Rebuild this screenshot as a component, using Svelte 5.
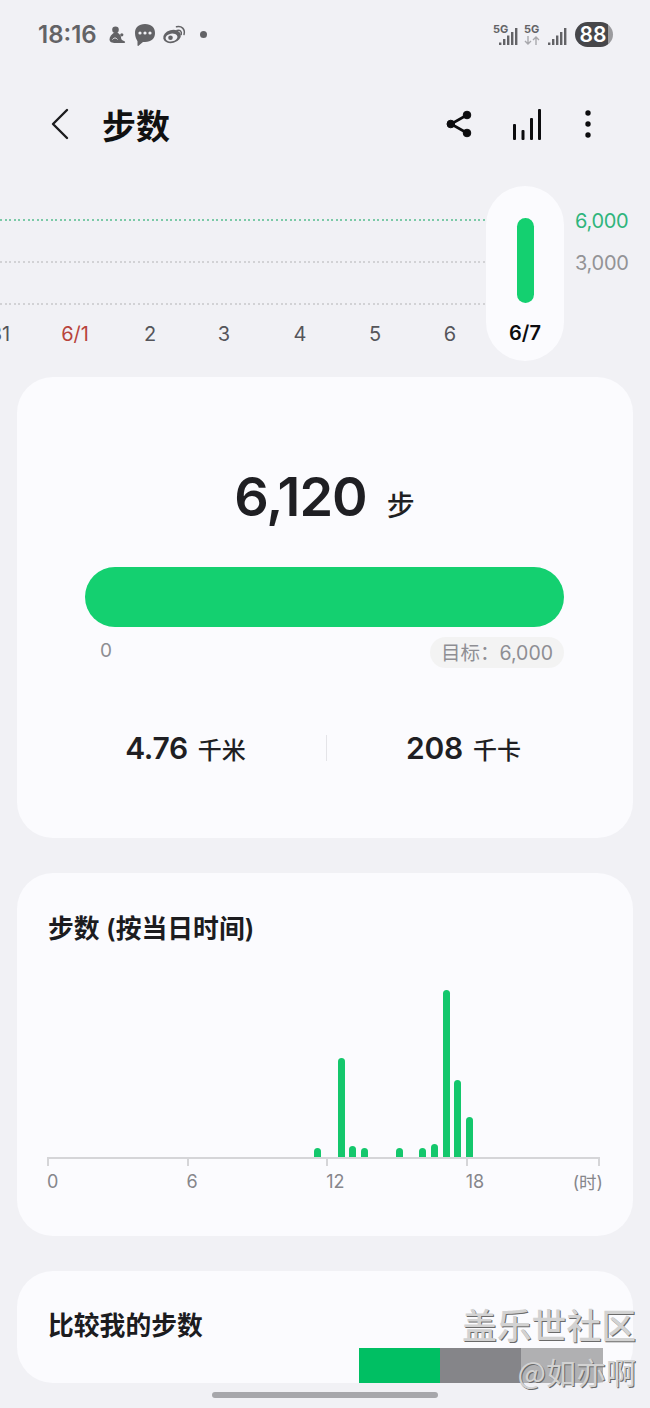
<script>
  const days = [
    { label: '31', x: 0 },
    { label: '6/1', x: 75, red: true },
    { label: '2', x: 150 },
    { label: '3', x: 224 },
    { label: '4', x: 300 },
    { label: '5', x: 375 },
    { label: '6', x: 450 }
  ];
  // half-hour slot -> bar height
  const steps = { 23: 9, 25: 99, 26: 11, 27: 9, 30: 9, 32: 9, 33: 13, 34: 167, 35: 77, 36: 40 };
  const slots = Array.from({ length: 47 }, (_, i) => steps[i] || 0);
  const hours = ['0', '6', '12', '18'];
</script>

<div class="page">
  <div class="status">
    <span class="time">18:16</span>
    <svg class="notif" width="90" height="26" viewBox="0 0 90 26" fill="#636366">
      <!-- qq -->
      <circle cx="8.500" cy="8.800" r="3.300"/>
      <path d="M8 11C4.500 13 2.500 16 2.500 18.500 2.500 21 5 22 8.500 22H17c1.500 0 1.500-1.500 0-2-2.500-1-3-2-3-4 0-2-3-4-4-5z"/>
      <circle cx="14.800" cy="13.800" r="1.600"/>
      <path d="M5.500 18.500c1.500-2 3.500-2 5 0" fill="none" stroke="#f1f1f5" stroke-width="1"/>
      <!-- chat bubble -->
      <path d="M38 3c6.500 0 10 3.600 10 9s-3.500 9-10 9h-2l-4.500 3.700c-.5.400-1 .1-1-.5v-4C29.500 18.500 28 16 28 12c0-5.400 3.500-9 10-9z"/>
      <circle cx="33" cy="12" r="1.600" fill="#f1f1f5"/><circle cx="38" cy="12" r="1.600" fill="#f1f1f5"/><circle cx="43" cy="12" r="1.600" fill="#f1f1f5"/>
      <!-- weibo -->
      <ellipse cx="65" cy="15.500" rx="9" ry="6.500" transform="rotate(-15 65 15.500)"/>
      <ellipse cx="64.500" cy="16.500" rx="6" ry="3.900" fill="#f1f1f5" transform="rotate(-10 64.500 16.500)"/>
      <circle cx="63.500" cy="16.800" r="2.300"/>
      <path d="M70 9.500c3-1 5 1 4.200 4M69.500 5.800c5-1.500 9 2.500 7.500 7.700" fill="none" stroke="#636366" stroke-width="1.500" stroke-linecap="round"/>
    </svg>
    <span class="dot"></span>
    <span class="grow"></span>
    <div class="sim">
      <span class="fiveg">5G</span>
      <svg width="19" height="17" viewBox="0 0 19 17" fill="#636366"><rect x="0" y="14.500" width="2.400" height="2.500"/><rect x="4" y="11" width="2.400" height="6"/><rect x="8" y="7.500" width="2.400" height="9.500"/><rect x="12" y="4" width="2.400" height="13"/><rect x="16" y="0" width="2.400" height="17"/></svg>
    </div>
    <div class="data">
      <span class="fiveg">5G</span>
      <svg width="16" height="9" viewBox="0 0 16 9" fill="none" stroke="#a9a9ad" stroke-width="1.400"><path d="M4 0v8M1 5l3 3 3-3M12 9V1M9 4l3-3 3 3"/></svg>
    </div>
    <svg class="sig2" width="19" height="17" viewBox="0 0 19 17" fill="#636366"><rect x="0" y="14.500" width="2.400" height="2.500"/><rect x="4" y="11" width="2.400" height="6"/><rect x="8" y="7.500" width="2.400" height="9.500"/><rect x="12" y="4" width="2.400" height="13"/><rect x="16" y="0" width="2.400" height="17"/></svg>
    <span class="battery">88</span>
  </div>

  <header>
    <svg class="back" width="18" height="32" viewBox="0 0 18 32" fill="none" stroke="#1c1c1e" stroke-width="2.400" stroke-linecap="round" stroke-linejoin="round"><path d="M16 2 2 16l14 14"/></svg>
    <h1>步数</h1>
    <span class="grow"></span>
    <svg class="share" width="26" height="28" viewBox="0 0 26 28" fill="#0c0c0e" stroke="#0c0c0e"><path d="M21 5 5 14l16 9" fill="none" stroke-width="2.600"/><circle cx="21" cy="5" r="3.800"/><circle cx="4.800" cy="14" r="3.800"/><circle cx="21" cy="23" r="3.800"/></svg>
    <svg class="bars" width="28" height="32" viewBox="0 0 28 32" fill="#0c0c0e"><rect x="0" y="15" width="3" height="16" rx="1"/><rect x="8.500" y="21" width="3" height="10" rx="1"/><rect x="17" y="9" width="3" height="22" rx="1"/><rect x="25" y="0" width="3" height="31" rx="1"/></svg>
    <svg class="more" width="8" height="30" viewBox="0 0 8 30" fill="#0c0c0e"><circle cx="4" cy="4" r="2.700"/><circle cx="4" cy="15" r="2.700"/><circle cx="4" cy="26" r="2.700"/></svg>
  </header>

  <section class="trend">
    <span class="line goal" style="top: 36px"></span>
    <span class="line" style="top: 78px"></span>
    <span class="line" style="top: 120px"></span>
    {#each days as d}
      <span class="day" class:red={d.red} style="left: {d.x}px">{d.label}</span>
    {/each}
    <div class="pill">
      <span class="pill-bar"></span>
      <span class="pill-label">6/7</span>
    </div>
    <span class="tick-label green" style="top: 25px">6,000</span>
    <span class="tick-label" style="top: 67px">3,000</span>
  </section>

  <section class="card summary">
    <div class="total"><b>6,120</b><span>步</span></div>
    <div class="progress"></div>
    <div class="scale">
      <span class="zero">0</span>
      <span class="target">目标：6,000</span>
    </div>
    <div class="stats">
      <div class="stat"><b>4.76</b><span>千米</span></div>
      <i class="divider"></i>
      <div class="stat"><b>208</b><span>千卡</span></div>
    </div>
  </section>

  <section class="card hourly">
    <h2>步数 (按当日时间)</h2>
    <div class="plot">
      {#each slots as h}
        <div class="slot">{#if h}<span class="step" style="height: {h}px"></span>{/if}</div>
      {/each}
    </div>
    <div class="axis">
      {#each hours as h}<span class="hour"><em>{h}</em></span>{/each}
      <span class="unit">(时)</span>
    </div>
  </section>

  <section class="card compare">
    <h2>比较我的步数</h2>
    <div class="compare-bars"><i class="c1"></i><i class="c2"></i><i class="c3"></i></div>
  </section>

  <div class="home"></div>
  <div class="watermark">
    <span class="wm1">盖乐世社区</span>
    <span class="wm2">@如亦啊</span>
  </div>
</div>

<style>
  :global(body) {
    margin: 0;
    background: #f1f1f5;
  }

  .page {
    position: relative;
    width: 650px;
    height: 1408px;
    overflow: hidden;
    background: #f1f1f5;
    font-family: Inter, "Noto Sans CJK SC", sans-serif;
    color: #1f1f23;
  }

  .grow { flex: 1; }

  .status {
    display: flex;
    align-items: center;
    height: 68px;
    padding: 0 37px 0 38px;
    color: #636366;
  }
  .time {
    font-size: 24px;
    font-weight: 600;
    width: 69px;
  }
  .notif { margin-right: 3px; }
  .dot {
    width: 7px;
    height: 7px;
    border-radius: 50%;
    background: #636366;
  }
  .sim, .data {
    position: relative;
    width: 24px;
    height: 24px;
  }
  .sim svg { position: absolute; left: 6px; top: 6px; }
  .fiveg {
    position: absolute;
    top: 0;
    left: 0;
    font-size: 11px;
    font-weight: 700;
    line-height: 14px;
  }
  .data { width: 16px; margin-left: 7px; margin-top: 2px; height: 26px; }
  .data svg { position: absolute; left: 0; top: 14px; }
  .sig2 { margin-left: 8px; margin-top: 5px; }
  .battery {
    margin-left: 8px;
    width: 38px;
    height: 25px;
    border-radius: 13px;
    background: linear-gradient(90deg, #47474a 0 87%, #9b9b9e 87%);
    color: #fff;
    font-size: 21px;
    font-weight: 600;
    line-height: 25px;
    text-align: center;
    text-indent: -2px;
  }

  header {
    display: flex;
    align-items: center;
    height: 115px;
    padding: 0 0 0 51px;
  }
  h1 {
    margin: -2px 0 0 33px;
    font-size: 34px;
    font-weight: 700;
    color: #111;
  }
  .back { margin-top: -3px; }
  .share { margin: -3px 0 0 0; }
  .bars { margin: -2px 0 0 41px; }
  .more { margin: -3px 58px 0 43px; }

  .trend {
    position: relative;
    height: 194px;
  }
  .line {
    position: absolute;
    left: 0;
    width: 486px;
    height: 2px;
    background: repeating-linear-gradient(90deg, #d2d2d5 0 2px, transparent 2px 4.600px);
  }
  .line.goal {
    background: repeating-linear-gradient(90deg, #7ccaa8 0 2px, transparent 2px 4.600px);
  }
  .day {
    position: absolute;
    top: 138px;
    width: 60px;
    margin-left: -30px;
    text-align: center;
    font-size: 20px;
    line-height: 26px;
    color: #55555a;
  }
  .day.red { color: #b8443c; }
  .pill {
    position: absolute;
    left: 486px;
    top: 3px;
    width: 78px;
    height: 175px;
    box-sizing: border-box;
    padding-top: 32px;
    border-radius: 39px;
    background: #fbfbfe;
    display: flex;
    flex-direction: column;
    align-items: center;
  }
  .pill-bar {
    width: 17px;
    height: 85px;
    border-radius: 9px;
    background: #14d070;
  }
  .pill-label {
    margin-top: 17px;
    font-size: 20px;
    font-weight: 600;
    line-height: 26px;
    color: #0c0c0e;
  }
  .tick-label {
    position: absolute;
    left: 575px;
    font-size: 20px;
    line-height: 26px;
    letter-spacing: -0.3px;
    color: #939396;
  }
  .tick-label.green { color: #2fb57c; }

  .card {
    margin: 0 17px;
    border-radius: 36px;
    background: #fbfbfe;
  }

  .summary {
    height: 461px;
    box-sizing: border-box;
    padding: 87px 69px 0 68px;
  }
  .total {
    display: flex;
    justify-content: center;
    align-items: baseline;
    height: 66px;
    line-height: 66px;
  }
  .total b {
    font-size: 54px;
    font-weight: 600;
    letter-spacing: -1px;
  }
  .total span {
    margin-left: 20px;
    font-size: 28px;
    font-weight: 500;
  }
  .progress {
    height: 60px;
    margin-top: 37px;
    border-radius: 30px;
    background: #14d070;
  }
  .scale {
    display: flex;
    justify-content: space-between;
    margin-top: 10px;
  }
  .zero {
    margin-left: 15px;
    font-size: 19px;
    line-height: 27px;
    color: #8e8e93;
  }
  .target {
    height: 31px;
    padding: 0 11px;
    border-radius: 16px;
    background: #f3f3f3;
    font-size: 19.500px;
    line-height: 32px;
    color: #8e8e93;
  }
  .stats {
    display: flex;
    align-items: center;
    margin: 65px -38px 0;
    height: 30px;
  }
  .stat {
    flex: 1;
    display: flex;
    justify-content: center;
    align-items: baseline;
    gap: 10px;
  }
  .stat b { font-size: 30px; font-weight: 600; letter-spacing: -0.3px; }
  .stat span { font-size: 24px; font-weight: 500; }
  .divider {
    width: 1px;
    height: 26px;
    background: #e4e4e8;
    transform: translateX(2px);
  }

  .hourly {
    height: 363px;
    margin-top: 35px;
    box-sizing: border-box;
    padding: 37px 0 0 31px;
  }
  h2 {
    margin: 0;
    font-size: 25.800px;
    font-weight: 600;
    line-height: 38px;
    color: #1c1c1f;
  }
  .plot {
    display: flex;
    align-items: flex-end;
    height: 209px;
    margin: 0 0 0 -4px;
  }
  .slot {
    flex: 0 0 11.667px;
    display: flex;
    justify-content: center;
  }
  .step {
    width: 7px;
    border-radius: 3.500px 3.500px 0 0;
    background: #14c76c;
  }
  .axis {
    position: relative;
    display: flex;
    width: 553px;
    height: 9px;
    margin-left: -1px;
    border-top: 2px solid #d5d5d8;
    border-right: 2px solid #d5d5d8;
    box-sizing: border-box;
  }
  .hour {
    flex: 0 0 139.600px;
    position: relative;
    height: 7px;
    border-left: 2px solid #d5d5d8;
    box-sizing: border-box;
  }
  .hour em {
    position: absolute;
    top: 11px;
    left: -2px;
    font-style: normal;
    font-size: 18px;
    line-height: 24px;
    color: #86868b;
  }
  .unit {
    position: absolute;
    right: -5px;
    top: 12px;
    font-size: 17.500px;
    line-height: 24px;
    color: #86868b;
  }

  .compare {
    position: relative;
    height: 112px;
    margin-top: 35px;
    box-sizing: border-box;
    padding: 36px 0 0 31px;
    overflow: hidden;
  }
  .compare-bars {
    position: absolute;
    left: 342px;
    bottom: 0;
    display: flex;
    height: 35px;
  }
  .compare-bars i { width: 81px; }
  .c1 { background: #00bf63; }
  .c2 { background: #858589; }
  .c3 { background: #b0b0b2; width: 82px !important; }

  .home {
    position: absolute;
    left: 212px;
    top: 1392px;
    width: 226px;
    height: 6px;
    border-radius: 3px;
    background: #a7a7ab;
  }

  .watermark {
    position: absolute;
    right: 14px;
    top: 1301px;
    display: flex;
    flex-direction: column;
    align-items: flex-end;
    color: #d2d2d2;
    font-family: "Noto Sans CJK SC", sans-serif;
    text-shadow: 1px 1px 0 #6a6a6a;
  }
  .wm1 { font-size: 34.800px; line-height: 46px; font-weight: 500; }
  .wm2 { font-size: 30px; line-height: 44px; margin-top: 2px; }
</style>
